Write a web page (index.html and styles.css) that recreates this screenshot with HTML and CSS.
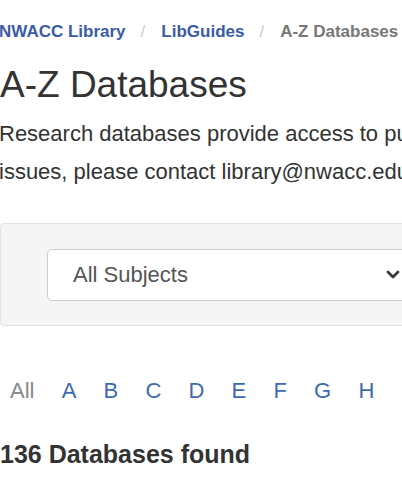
FILE: index.html
```html
<!DOCTYPE html>
<html>
<head>
<meta charset="utf-8">
<link rel="stylesheet" href="styles.css">
</head>
<body>
<div class="page">
  <nav class="crumbs">
    <a class="crumb" href="#">NWACC Library</a>
    <span class="sep">/</span>
    <a class="crumb" href="#">LibGuides</a>
    <span class="sep">/</span>
    <span class="crumb current">A-Z Databases</span>
  </nav>
  <h1 class="title">A-Z Databases</h1>
  <p class="intro">Research databases provide access to published articles, ebooks, streaming video and more. For access<br>issues, please contact library@nwacc.edu.</p>
  <div class="filters">
    <div class="select">
      <span class="select-label">All Subjects</span>
      <svg class="chev" width="14" height="10" viewBox="0 0 14 10"><polyline points="2,2 7,7 12,2" fill="none" stroke="#3a3a3a" stroke-width="2.8" stroke-linecap="round" stroke-linejoin="round"/></svg>
    </div>
  </div>
  <div class="letters">
    <span class="letter all">All</span>
    <a class="letter" href="#">A</a>
    <a class="letter" href="#">B</a>
    <a class="letter" href="#">C</a>
    <a class="letter" href="#">D</a>
    <a class="letter" href="#">E</a>
    <a class="letter" href="#">F</a>
    <a class="letter" href="#">G</a>
    <a class="letter" href="#">H</a>
    <a class="letter" href="#">I</a>
    <a class="letter" href="#">J</a>
  </div>
  <h2 class="count">136 Databases found</h2>
</div>
</body>
</html>
```
FILE: styles.css
```css
html, body {
  margin: 0;
  padding: 0;
  overflow: hidden;
  background: #fff;
}
body {
  font-family: "Liberation Sans", Arial, sans-serif;
  color: #333;
}
.page {
  width: 440px;
  padding-top: 20px;
}
.crumbs {
  display: flex;
  align-items: center;
  white-space: nowrap;
  font-size: 17px;
  font-weight: bold;
  line-height: 24px;
  height: 24px;
  margin-left: -1px;
}
.crumb {
  color: #3a5ca6;
  text-decoration: none;
}
.crumb.current {
  color: #777;
}
.sep {
  color: #ccc;
  font-weight: normal;
  padding: 0 16px 0 15px;
}
.title {
  margin: 19px 0 0 0;
  font-size: 37px;
  font-weight: normal;
  line-height: 44px;
  color: #333;
  white-space: nowrap;
}
.intro {
  margin: 8px 0 0 -1px;
  font-size: 22px;
  line-height: 38px;
  color: #333;
  white-space: nowrap;
}
.filters {
  margin-top: 32px;
  background: #f5f5f5;
  border: 1px solid #e3e3e3;
  border-radius: 4px;
  box-sizing: border-box;
  height: 103px;
  padding: 25px 0 0 46px;
}
.select {
  display: flex;
  align-items: center;
  justify-content: space-between;
  box-sizing: border-box;
  height: 52px;
  width: 374px;
  background: #fff;
  border: 1px solid #ccc;
  border-radius: 5px;
  padding: 0 20px 0 25px;
}
.select-label {
  font-size: 22px;
  color: #555;
}
.chev {
  display: block;
  margin-right: 0;
}
.letters {
  margin-top: 50px;
  display: flex;
  white-space: nowrap;
  font-size: 22px;
  line-height: 30px;
}
.letter {
  padding: 0 13.6px;
  color: #3f6bab;
  text-decoration: none;
}
.letter.all {
  color: #888;
  padding-left: 10px;
}
.count {
  margin: 33px 0 0 0;
  font-size: 25px;
  font-weight: bold;
  line-height: 30px;
  color: #333;
}
```
